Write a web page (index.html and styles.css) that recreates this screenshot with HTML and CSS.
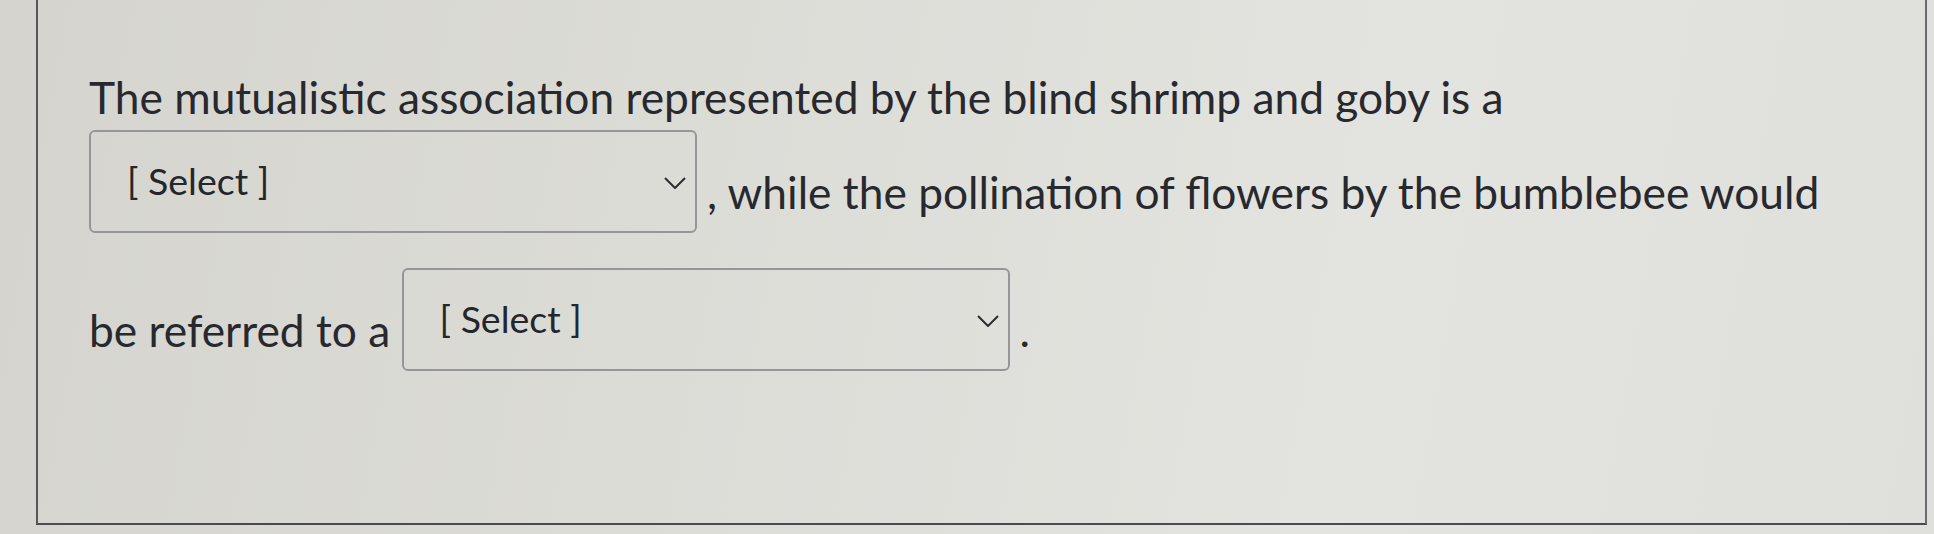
FILE: index.html
```html
<!DOCTYPE html>
<html lang="en">
<head>
<meta charset="utf-8">
<title>Question</title>
<link rel="stylesheet" href="styles.css">
</head>
<body>
<div class="question">
  <p class="question-text">The mutualistic association represented by the blind shrimp and goby is a <span class="select"><span class="select-label">[ Select ]</span><svg class="chevron" viewBox="0 0 22 12" width="22" height="12"><polyline points="1,1 11,11 21,1" fill="none" stroke="#2b2d31" stroke-width="2"/></svg></span>, while the pollination of flowers by the bumblebee would be referred to a <span class="select"><span class="select-label">[ Select ]</span><svg class="chevron" viewBox="0 0 22 12" width="22" height="12"><polyline points="1,1 11,11 21,1" fill="none" stroke="#2b2d31" stroke-width="2"/></svg></span>.</p>
</div>
</body>
</html>
```
FILE: styles.css
```css
html, body {
  margin: 0;
  padding: 0;
  height: 100%;
}
body {
  background: linear-gradient(100deg, #d5d4ce 0%, #dcdcd7 35%, #e3e3df 70%, #dfdfdb 100%);
  font-family: Lato, "Open Sans", sans-serif;
  color: #27292e;
  overflow: hidden;
}
.question {
  margin-left: 36px;
  width: 1891px;
  height: 525px;
  box-sizing: border-box;
  border-left: 2px solid #55555a;
  border-right: 2px solid #6a6a6e;
  border-bottom: 2px solid #4a4a50;
  padding: 0 0 0 51px;
}
.question-text {
  margin: 0;
  padding-top: 64px;
  width: 1775px;
  font-size: 44.3px;
  line-height: 66px;
}
.select {
  display: inline-block;
  position: relative;
  overflow: hidden;
  box-sizing: border-box;
  width: 608px;
  height: 103px;
  border: 2px solid #96969a;
  border-radius: 6px;
  vertical-align: -59px;
  margin: 0 10px 35px 0;
  padding: 0 0 0 36px;
  line-height: 1;
}
.select-label {
  display: block;
  font-size: 37.5px;
  padding-top: 30px;
  color: #24262b;
}
.chevron {
  position: absolute;
  right: 9px;
  top: 45px;
}
```
